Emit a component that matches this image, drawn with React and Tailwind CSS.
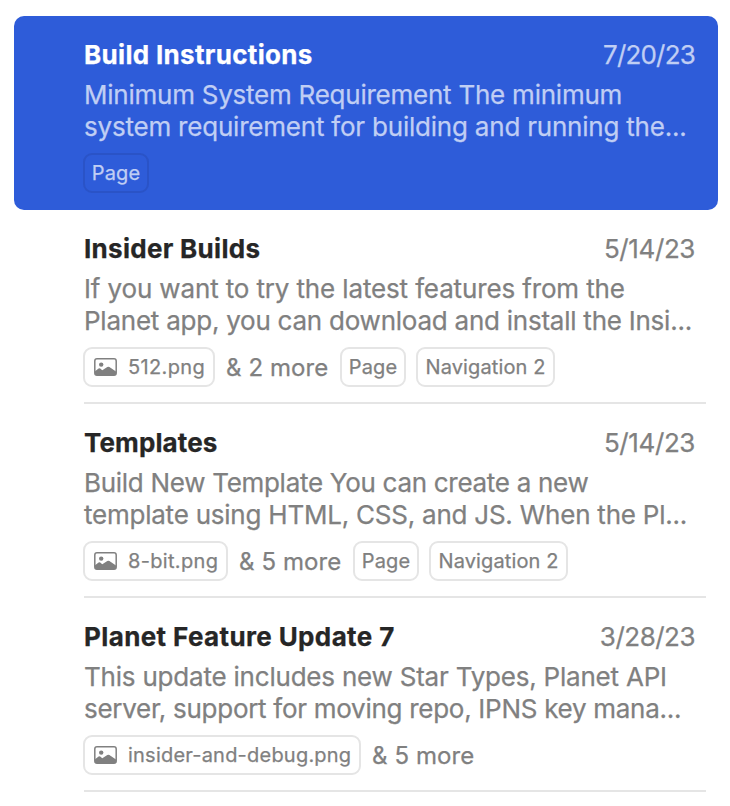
// Article list with one selected row

const ARTICLES = [
  {
    title: "Build Instructions",
    titleClass: "tracking-[0.32px]",
    date: "7/20/23",
    dateClass: "tracking-[-0.8px]",
    lines: [
      { text: "Minimum System Requirement The minimum", className: "tracking-[-0.24px]" },
      { text: "system requirement for building and running the...", className: "tracking-[-0.21px]" },
    ],
    tags: [{ label: "Page", className: "w-[66px]" }],
    selected: true,
  },
  {
    title: "Insider Builds",
    titleClass: "tracking-[0.3px]",
    date: "5/14/23",
    dateClass: "tracking-[-0.4px]",
    lines: [
      { text: "If you want to try the latest features from the", className: "tracking-[-0.14px]" },
      { text: "Planet app, you can download and install the Insi...", className: "tracking-[-0.24px]" },
    ],
    file: { name: "512.png", className: "w-[132px] tracking-[0.35px]" },
    more: "& 2 more",
    tags: [
      { label: "Page", className: "w-[66px]" },
      { label: "Navigation 2", className: "w-[139px]" },
    ],
  },
  {
    title: "Templates",
    titleClass: "tracking-[0.12px]",
    date: "5/14/23",
    dateClass: "tracking-[-0.4px]",
    lines: [
      { text: "Build New Template You can create a new", className: "tracking-[-0.29px]" },
      { text: "template using HTML, CSS, and JS. When the Pl...", className: "tracking-[-0.23px]" },
    ],
    file: { name: "8-bit.png", className: "w-[145px] tracking-[0.33px]" },
    more: "& 5 more",
    tags: [
      { label: "Page", className: "w-[66px]" },
      { label: "Navigation 2", className: "w-[139px]" },
    ],
  },
  {
    title: "Planet Feature Update 7",
    titleClass: "tracking-[0.38px]",
    date: "3/28/23",
    dateClass: "tracking-[-0.5px]",
    lines: [
      { text: "This update includes new Star Types, Planet API", className: "tracking-[-0.21px]" },
      { text: "server, support for moving repo, IPNS key mana...", className: "tracking-[-0.28px]" },
    ],
    file: { name: "insider-and-debug.png", className: "w-[278px] tracking-[0.22px]" },
    more: "& 5 more",
    tags: [],
  },
];

// Framed photo with a sun and two hills
const PhotoIcon = () => (
  <svg width="24" height="18" viewBox="0 0 24 18" fill="none" className="shrink-0">
    <rect x="1.8" y="0.8" width="21.4" height="16.4" rx="2.2" stroke="#808080" strokeWidth="1.5" />
    <circle cx="8.2" cy="6.6" r="2.2" fill="#808080" />
    <path
      d="M2 13.2L5.6 10.5Q6.4 9.9 7.2 10.5L9.3 12.2L14.3 9Q15.4 8.3 16.4 9L23 13.4V15.5Q23 17.3 21.2 17.3H3.8Q2 17.3 2 15.5Z"
      fill="#808080"
    />
  </svg>
);

const Tag = ({ label, className, selected }) => (
  <span
    className={`flex h-10 shrink-0 items-center justify-center rounded-[9px] border-2 text-[20px] tracking-[0.12px] ${className} ${
      selected ? "border-[#2a53c7]" : "border-[#e5e5e5]"
    }`}
  >
    {label}
  </span>
);

const ArticleRow = ({ article }) => {
  const { title, titleClass, date, dateClass, lines, file, more, tags, selected } = article;
  return (
    <li
      className={`h-[194px] pl-[70px] ${
        selected ? "rounded-[10px] bg-[#2e5cd9] text-[#c0cef4]" : "text-[#808080]"
      }`}
    >
      <div className={`mr-3 h-full pt-[23px] ${selected ? "" : "border-b-2 border-[#e5e5e5]"}`}>
        <div className="flex h-8 items-center justify-between pr-[11px]">
          <h2 className={`font-bold ${titleClass} ${selected ? "text-white" : "text-[#262626]"}`}>{title}</h2>
          <span className={dateClass}>{date}</span>
        </div>

        <div className="mt-2 whitespace-nowrap">
          {lines.map((line) => (
            <p key={line.text} className={line.className}>
              {line.text}
            </p>
          ))}
        </div>

        <div className="-ml-px mt-2.5 flex items-center">
          {file && (
            <span
              className={`flex h-10 shrink-0 items-center rounded-[9px] border-2 border-[#e5e5e5] pl-2 text-[20px] ${file.className}`}
            >
              <PhotoIcon />
              <span className="ml-[11px]">{file.name}</span>
            </span>
          )}
          {more && (
            <span className="w-[125px] shrink-0 whitespace-nowrap pl-[11px] pt-px text-[24px] leading-8 tracking-[0.1px]">
              {more}
            </span>
          )}
          <div className="flex gap-2.5">
            {tags.map((tag) => (
              <Tag key={tag.label} {...tag} selected={selected} />
            ))}
          </div>
        </div>
      </div>
    </li>
  );
};

export default function App() {
  return (
    <main className="h-[806px] w-[730px] overflow-hidden bg-white px-3.5 pt-4 font-['Inter','Liberation_Sans',sans-serif] text-[26px] leading-8 [-webkit-text-stroke:0.25px]">
      <ul className="w-[704px]">
        {ARTICLES.map((article) => (
          <ArticleRow key={article.title} article={article} />
        ))}
      </ul>
    </main>
  );
}
